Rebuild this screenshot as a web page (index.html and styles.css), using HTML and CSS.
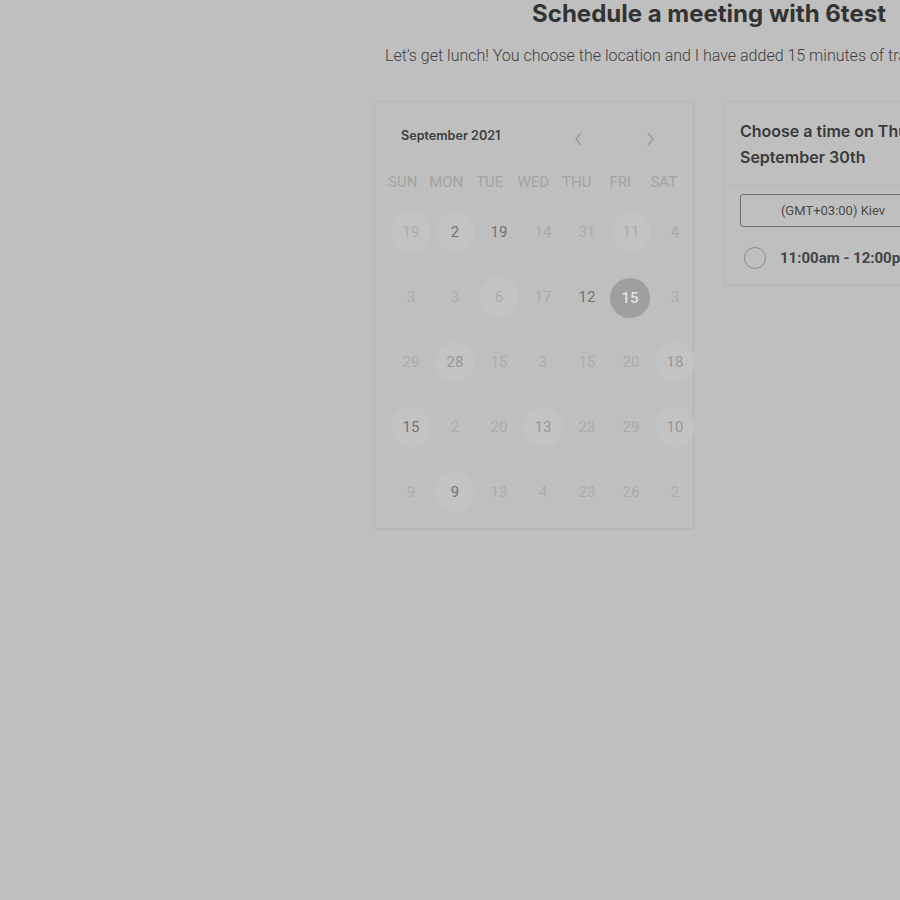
FILE: index.html
```html
<!DOCTYPE html>
<html>
<head>
<meta charset="utf-8">
<link rel="stylesheet" href="styles.css">
</head>
<body>
<div class="page">
  <h1 class="title">Schedule a meeting with 6test</h1>
  <p class="desc">Let’s get lunch! You choose the location and I have added 15 minutes of travel time to the meeting.</p>
  <div class="panels">
    <div class="card calendar">
      <div class="cal-head">
        <span class="month">September 2021</span>
        <span class="arrows">
          <svg class="arrow" width="12" height="16" viewBox="0 0 12 16"><path d="M8 2 L3 8 L8 14" fill="none" stroke="#9c9c9c" stroke-width="1.6"/></svg>
          <svg class="arrow" width="12" height="16" viewBox="0 0 12 16"><path d="M4 2 L9 8 L4 14" fill="none" stroke="#9c9c9c" stroke-width="1.6"/></svg>
        </span>
      </div>
      <div class="weekdays">
        <span>SUN</span><span>MON</span><span>TUE</span><span>WED</span><span>THU</span><span>FRI</span><span>SAT</span>
      </div>
      <div class="days">
        <span class="day c">19</span><span class="day c dark">2</span><span class="day dark">19</span><span class="day">14</span><span class="day">31</span><span class="day c">11</span><span class="day">4</span>
        <span class="day">3</span><span class="day">3</span><span class="day c">6</span><span class="day">17</span><span class="day dark">12</span><span class="day sel">15</span><span class="day">3</span>
        <span class="day">29</span><span class="day c mid">28</span><span class="day">15</span><span class="day">3</span><span class="day">15</span><span class="day">20</span><span class="day c mid">18</span>
        <span class="day c dark">15</span><span class="day">2</span><span class="day">20</span><span class="day c mid">13</span><span class="day">23</span><span class="day">29</span><span class="day c mid">10</span>
        <span class="day">9</span><span class="day c dark">9</span><span class="day">13</span><span class="day">4</span><span class="day">23</span><span class="day">26</span><span class="day">2</span>
      </div>
    </div>
    <div class="card times">
      <div class="times-head">Choose a time on Thursday, September 30th</div>
      <div class="times-body">
        <div class="tz">(GMT+03:00) Kiev</div>
        <label class="slot"><span class="radio"></span><span class="slot-text">11:00am - 12:00pm</span></label>
      </div>
    </div>
  </div>
</div>
</body>
</html>
```
FILE: styles.css
```css
html, body {
  margin: 0;
  padding: 0;
  overflow: hidden;
  background: #bfbfbf;
}
body {
  width: 900px;
  height: 900px;
}
.page {
  margin-left: 374px;
  width: 670px;
  display: flex;
  flex-direction: column;
  align-items: center;
}
.title {
  margin: 0;
  font-family: Inter, "Liberation Sans", sans-serif;
  font-weight: 700;
  font-size: 24px;
  line-height: 28px;
  color: #333333;
  letter-spacing: 0;
}
.desc {
  align-self: flex-start;
  margin: 15px 0 0 11px;
  font-family: Roboto, "Liberation Sans", sans-serif;
  font-weight: 300;
  font-size: 16px;
  line-height: 26px;
  color: #3e3e3e;
  white-space: nowrap;
}
.panels {
  align-self: stretch;
  display: flex;
  gap: 30px;
  margin-top: 32px;
  align-items: flex-start;
}
.card {
  width: 320px;
  box-sizing: border-box;
  background: #bfbfbf;
  border: 1px solid #b6b6b6;
  border-radius: 2px;
  box-shadow: 0 1px 2px rgba(0,0,0,0.04);
}
.calendar {
  height: 428px;
  padding: 0 0 0 14px;
}
.cal-head {
  display: flex;
  align-items: center;
  height: 66px;
  padding-left: 12px;
}
.month {
  font-family: Inter, "Liberation Sans", sans-serif;
  font-weight: 600;
  font-size: 12.6px;
  color: #3d3d3d;
  width: 172px;
  margin-top: 1px;
}
.arrows {
  display: flex;
  gap: 59px;
  margin-top: 7px;
}
.weekdays {
  display: grid;
  grid-template-columns: repeat(7, 43.5px);
  margin-left: -8px;
  font-family: Roboto, "Liberation Sans", sans-serif;
  font-size: 15px;
  color: #a3a3a3;
  line-height: 28px;
  text-align: center;
}
.days {
  display: grid;
  grid-template-columns: repeat(7, 44px);
  grid-auto-rows: 40px;
  row-gap: 25px;
  margin-top: 16px;
}
.day {
  width: 40px;
  height: 40px;
  margin-left: 2px;
  border-radius: 50%;
  display: flex;
  align-items: center;
  justify-content: center;
  font-family: Roboto, "Liberation Sans", sans-serif;
  font-size: 15px;
  color: #ababab;
}
.day.c { background: #c3c3c3; }
.day.mid { color: #979797; }
.day.dark { color: #727272; }
.day.sel {
  background: #9f9f9f;
  color: #e2e2e2;
  font-weight: 500;
  margin-left: 1px;
  margin-top: 1px;
}
.times {
  padding: 0;
}
.times-head {
  padding: 16px 60px 15px 15px;
  font-family: Inter, "Liberation Sans", sans-serif;
  font-weight: 600;
  font-size: 16px;
  line-height: 26px;
  color: #3a3a3a;
  border-bottom: 1px solid #b6b6b6;
}
.times-body {
  padding: 8px 15px 15px;
}
.tz {
  width: 186px;
  height: 33px;
  box-sizing: border-box;
  border: 1px solid #6f6f6f;
  border-radius: 3px;
  display: flex;
  align-items: center;
  justify-content: center;
  font-family: Roboto, "Liberation Sans", sans-serif;
  font-size: 13px;
  color: #4a4a4a;
}
.slot {
  display: flex;
  align-items: center;
  gap: 14px;
  margin-top: 20px;
  padding-left: 4px;
}
.radio {
  width: 22px;
  height: 22px;
  border: 1.5px solid #8a8a8a;
  border-radius: 50%;
  box-sizing: border-box;
}
.slot-text {
  font-family: Roboto, "Liberation Sans", sans-serif;
  font-weight: 700;
  font-size: 15px;
  color: #444444;
  white-space: nowrap;
}
```
